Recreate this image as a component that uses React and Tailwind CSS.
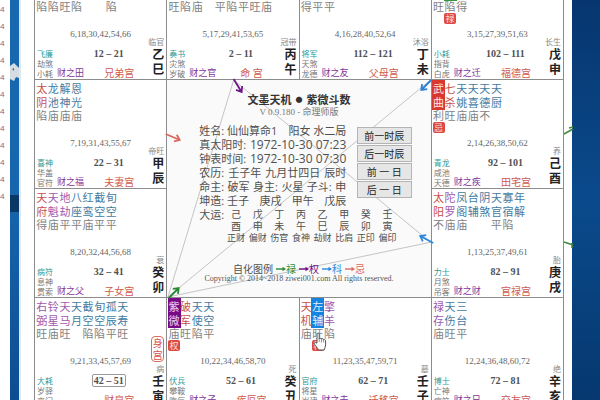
import React from 'react';
import clsx from 'clsx';

const MAIN = 'text-[#c9504a]';
const MINOR = 'text-[#a058ae]';
const MISC = 'text-[#447b9f]';

const star = (name, level = '', color = MISC, extra = {}) => ({ name, level, color, ...extra });

// the star names of the top row are scrolled out of view
const levels = (text) => [...text].map((level) => star('', level.trim()));

const TOP = [
  {
    stars: levels('陷陷旺陷  陷'), ages: '6,18,30,42,54,66', range: '12 – 21',
    gods: ['飞廉', '劫煞', '小耗'], relation: '财之田', palace: '兄弟宫', phase: '临官', pillar: '乙巳',
  },
  {
    stars: levels('旺陷庙 平陷平旺庙'), ages: '5,17,29,41,53,65', range: '2 – 11',
    gods: ['奏书', '灾煞', '岁破'], relation: '财之官', palace: '命 宫', phase: '冠带', pillar: '丙午',
  },
  {
    stars: levels('得平平'), ages: '4,16,28,40,52,64', range: '112 – 121',
    gods: ['将军', '天煞', '龙德'], relation: '财之友', palace: '父母宫', phase: '沐浴', pillar: '丁未',
  },
  {
    stars: [star('', '旺'), star('', '陷', MISC, { fill: 'bg-[#2f9a3c]', tag: '禄' }), star('', '得')],
    ages: '3,15,27,39,51,63', range: '102 – 111',
    gods: ['小耗', '指背', '白虎'], relation: '财之迁', palace: '福德宫', phase: '长生', pillar: '戊申',
  },
];

const LEFT = [
  {
    stars: [star('太阴', '陷', MAIN), star('龙池', '庙'), star('解神', '庙'), star('恩光', '庙')],
    ages: '7,19,31,43,55,67', range: '22 – 31',
    gods: ['喜神', '华盖', '官符'], relation: '财之福', palace: '夫妻宫', phase: '帝旺', pillar: '甲辰',
  },
  {
    stars: [
      star('天府', '得', MAIN), star('天魁', '庙', MINOR), star('地劫', '平', MINOR), star('八座', '平'),
      star('红鸾', '庙'), star('截空', '平'), star('旬空', '平'),
    ],
    ages: '8,20,32,44,56,68', range: '32 – 41',
    gods: ['病符', '息神', '贯索'], relation: '财之父', palace: '子女宫', phase: '衰', pillar: '癸卯',
  },
];

const RIGHT = [
  {
    stars: [
      star('武曲', '利', 'text-[#ffe4e0]', { fill: 'bg-[#d8382f]', tag: '忌' }), star('七杀', '旺', MAIN),
      star('天姚', '庙'), star('天喜', '庙'), star('天德', '不'), star('天厨'),
    ],
    ages: '2,14,26,38,50,62', range: '92 – 101',
    gods: ['青龙', '咸池', '天德'], relation: '财之疾', palace: '田宅宫', phase: '养', pillar: '己酉',
  },
  {
    stars: [
      star('太阳', '不', MAIN), star('陀罗', '庙', MINOR), star('凤阁', '庙'), star('台辅'),
      star('阴煞'), star('天官', '平'), star('寡宿', '陷'), star('年解'),
    ],
    ages: '1,13,25,37,49,61', range: '82 – 91',
    gods: ['力士', '月煞', '吊客'], relation: '财之财', palace: '官禄宫', phase: '胎', pillar: '庚戌',
  },
];

const BOTTOM = [
  {
    stars: [
      star('右弼', '旺', MINOR), star('铃星', '庙', MINOR), star('天马', '旺', MINOR), star('天月'),
      star('截空', '陷'), star('旬空', '陷'), star('孤辰', '平'), star('天寿', '旺'),
    ],
    ages: '9,21,33,45,57,69', range: '42 – 51', current: true, body: true,
    gods: ['大耗', '岁驿', '丧门'], relation: '', palace: '财帛宫', phase: '病', pillar: '壬寅',
  },
  {
    stars: [
      star('紫微', '庙', 'text-[#ecd4f0]', { fill: 'bg-[#780a88]', tag: '权' }), star('破军', '旺', MAIN),
      star('天使', '陷'), star('天空', '平'),
    ],
    ages: '10,22,34,46,58,70', range: '52 – 61',
    gods: ['伏兵', '攀鞍', '晦气'], relation: '财之子', palace: '疾厄宫', phase: '死', pillar: '癸丑',
  },
  {
    stars: [
      star('天机', '庙', MAIN), star('左辅', '旺', 'text-[#e0f0ff]', { fill: 'bg-[#1583e0]', tag: '科', pointer: true }),
      star('擎羊', '陷', MINOR),
    ],
    ages: '11,23,35,47,59,71', range: '62 – 71',
    gods: ['官府', '将星', '岁建'], relation: '财之夫', palace: '迁移宫', phase: '墓', pillar: '壬子',
  },
  {
    stars: [star('禄存', '庙', MINOR), star('天伤', '旺'), star('三台', '平')],
    ages: '12,24,36,48,60,72', range: '72 – 81',
    gods: ['博士', '亡神', '病符'], relation: '财之兄', palace: '交友宫', phase: '绝', pillar: '辛亥',
  },
];

const DECADES = [
  ['己', '戊', '丁', '丙', '乙', '甲', '癸', '壬'],
  ['酉', '申', '未', '午', '巳', '辰', '卯', '寅'],
  ['正财', '偏财', '伤官', '食神', '劫财', '比肩', '正印', '偏印'],
];

const LEGEND = [
  { label: '禄', color: 'text-[#2a8a35]' },
  { label: '权', color: 'text-[#780a88]' },
  { label: '科', color: 'text-[#2b87dc]' },
  { label: '忌', color: 'text-[#dd6a60]' },
];

const ARROWS = [
  { from: [233, 79], to: [241, 92], color: '#6f1784' },
  { from: [431, 80], to: [421, 90], color: '#2b80d4' },
  { from: [165, 134], to: [179, 140], color: '#d9685f' },
  { from: [168, 298], to: [178, 288], color: '#268a35' },
  { from: [433, 243], to: [420, 236], color: '#2b87dc' },
];

const Arrow = ({ from, to, color }) => {
  const angle = Math.atan2(to[1] - from[1], to[0] - from[0]);
  const wing = (turn) => `${to[0] - 6 * Math.cos(angle + turn)} ${to[1] - 6 * Math.sin(angle + turn)}`;
  return (
    <path
      d={`M${from[0]} ${from[1]}L${to[0]} ${to[1]}M${wing(0.65)}L${to[0]} ${to[1]}L${wing(-0.65)}`}
      stroke={color}
      strokeWidth="1.8"
      fill="none"
    />
  );
};

const HandCursor = () => (
  <svg viewBox="0 0 14 19" className="absolute left-px top-[34px] z-10 h-[19px] w-3.5" aria-hidden="true">
    <path
      d="M4 11V2.2c0-1.6 2.2-1.6 2.2 0V7c.4-1 2-.8 2.2.3.5-.9 2-.6 2.2.5.6-.7 2-.4 2 1V13c0 2-1 3-1.4 5H5.400c-.6-2-2.400-3.600-3.900-5.800-.8-1.300.8-2.300 1.700-1.200z"
      fill="#fff"
      stroke="#555"
      strokeWidth="1"
    />
    <path d="M6.200 7v3M8.400 7.500v3M10.600 8v2.500" stroke="#777" strokeWidth=".8" />
  </svg>
);

const Star = ({ name, level, color, fill, tag, pointer }) => (
  <div className="relative flex flex-col items-center">
    <div className={clsx('flex h-[30px] w-[13px] flex-col items-center pt-0.5 text-[11px] leading-[14px]', color, fill)}>
      {[...name].map((ch) => <span key={ch}>{ch}</span>)}
    </div>
    <span className="h-3 text-[11px] leading-3 text-[#828282]">{level}</span>
    {tag && (
      <span className="w-3 rounded-xs bg-[#dc4a42] text-center text-[9px] leading-[11px] text-[#ffe4e0]">{tag}</span>
    )}
    {pointer && <HandCursor />}
  </div>
);

const Palace = ({ stars, ages, range, current, body, gods, relation, palace, phase, pillar }) => (
  <section className="flex h-[109px] min-w-0 flex-col justify-between border-b border-r border-[#8c8c8c] bg-white">
    <div className="grid h-0 grid-cols-11 pl-px pr-[3px]">
      {stars.map((s, i) => <Star key={i} {...s} />)}
    </div>

    <div className="flex items-end px-0.5">
      <div className="w-4 shrink-0 whitespace-nowrap text-[8px] leading-[10px] text-[#777]">
        {gods.map((god, i) => <p key={god} className={clsx(i === 0 && 'text-[#2c9a97]')}>{god}</p>)}
      </div>

      <div className="min-w-0 flex-1">
        <p className="text-center font-['Liberation_Serif',serif] text-[9px] leading-3 text-[#666]">{ages}</p>
        <p className="mt-2 pl-4 text-center font-['Liberation_Serif',serif] text-[10px] font-bold leading-3 text-[#505050]">
          <span className={clsx(current && 'rounded-xs border border-[#999] px-px')}>{range}</span>
        </p>
        <div className="mt-[7px] flex items-center justify-between whitespace-nowrap pl-1 pr-3.5 leading-3">
          <span className="text-[9px] text-[#82369a]">{relation}</span>
          <span className="w-[30px] text-center text-[10px] text-[#cf5a4c]">{palace}</span>
        </div>
      </div>

      <div className="flex w-4 shrink-0 flex-col items-end pb-0.5">
        {body && (
          <span className="mb-0.5 flex w-[13px] flex-col items-center rounded-sm border border-[#dd6a60] text-[10px] leading-3 text-[#d4534a]">
            <span>身</span>
            <span>宫</span>
          </span>
        )}
        <span className="whitespace-nowrap text-[8px] leading-[10px] text-[#888]">{phase}</span>
        <span className="flex flex-col text-[12px] font-bold leading-[15px] text-[#222]">
          {[...pillar].map((ch) => <span key={ch}>{ch}</span>)}
        </span>
      </div>
    </div>
  </section>
);

const Row = ({ children }) => <p className="flex justify-between whitespace-pre">{children}</p>;

const Digits = ({ children }) => <span className="text-xs leading-[14px]">{children}</span>;

const CenterPanel = () => (
  <section className="relative col-span-2 row-span-2 border-b border-r border-[#8c8c8c] bg-[#fafafa] text-[#505050]">
    <svg viewBox="166 80 265 218" preserveAspectRatio="none" className="absolute inset-0 h-full w-full" aria-hidden="true">
      <path d="M233 80L167 298L431 80M233 80L431 243L167 298" fill="none" stroke="#c4c4c4" strokeWidth="1" />
    </svg>

    <div className="relative flex h-full flex-col pt-3">
      <h1 className="flex items-center justify-center gap-1 text-[11px] font-bold leading-4 text-[#333]">
        <span>文墨天机</span>
        <span className="text-[7px]">●</span>
        <span>紫微斗数</span>
      </h1>
      <p className="text-center font-['Liberation_Serif','Noto_Sans_CJK_SC',serif] text-[9px] leading-2 text-[#777]">V 0.9.180 - 命理师版</p>

      <div className="mt-2 flex justify-between pl-8 pr-[19px]">
        <div className="w-[147px] text-[11px] leading-[14px]">
          <Row><span>姓名: 仙仙算命1</span><span>阳女 水二局</span></Row>
          <Row><span>真太阳时:</span><Digits>1972-10-30 07:23</Digits></Row>
          <Row><span>钟表时间:</span><Digits>1972-10-30 07:30</Digits></Row>
          <Row><span>农历:</span><span>壬子年</span><span>九月廿四日</span><span>辰时</span></Row>
          <Row><span>命主:</span><span>破军</span><span>身主:</span><span>火星</span><span>子斗:</span><span>申</span></Row>
          <Row><span>坤造: 壬子</span><span>庚戌</span><span>甲午</span><span>戊辰</span></Row>
        </div>
        <div className="flex flex-col gap-px pt-[3px]">
          {['前一时辰', '后一时辰', '前 一 日', '后 一 日'].map((label) => (
            <button
              key={label}
              type="button"
              className="h-[17px] w-[55px] border border-[#b4b4b4] bg-[#e6e6e6] text-[10px] leading-3 text-[#222]"
            >
              {label}
            </button>
          ))}
        </div>
      </div>

      <div className="flex pl-8 text-[11px] leading-[14px]">
        <span className="w-[26px]">大运:</span>
        <table className="w-[173px] table-fixed text-center">
          <tbody>
            {DECADES.map((row, i) => (
              <tr key={i} className={clsx('leading-3', i === 2 ? 'text-[9px]' : 'text-[10px]')}>
                {row.map((cell) => <td key={cell} className="whitespace-nowrap p-0">{cell}</td>)}
              </tr>
            ))}
          </tbody>
        </table>
      </div>

      <div className="mt-auto pb-3.5 text-center">
        <p className="flex justify-center gap-[3px] text-[10px] leading-3">
          <span>自化图例</span>
          {LEGEND.map(({ label, color }) => (
            <span key={label} className={clsx('flex items-center', color)}>
              <svg viewBox="0 0 10 6" className="h-1.5 w-2.5" aria-hidden="true">
                <path d="M0 3H8" stroke="currentColor" strokeWidth="1.400" />
                <path d="M6.500 .8L10 3L6.500 5.200Z" fill="currentColor" />
              </svg>
              {label}
            </span>
          ))}
        </p>
        <p className="font-['Liberation_Serif',serif] text-[8px] leading-2 text-[#555]">
          Copyright © 2014~2018 ziwei001.com All rights reserved.
        </p>
      </div>
    </div>
  </section>
);

export default function App() {
  return (
    <div className="flex h-screen overflow-hidden bg-white font-['Open_Sans','Noto_Sans_CJK_SC',sans-serif]">
      {/* Edge of the window behind */}
      <div className="w-2.5 shrink-0 text-[8px] leading-[17px] text-[#8b5c7c]">
        {[...Array(12)].map((_, i) => <p key={i}>4</p>)}
      </div>
      <div className="w-[9px] shrink-0 bg-linear-to-b from-[#1768ae] via-[#1665ad] to-[#0d4d92]">
        <svg viewBox="0 0 9 400" preserveAspectRatio="none" className="h-full w-full" aria-hidden="true">
          <path d="M0 66L4 63L7 66L9 68V78L6 77L4 81L0 79Z" fill="#d5dde2" />
          <path d="M2 69L4 68V71Z" fill="#5d6970" />
          <path d="M0 195H9V212H0Z" fill="#0b3767" />
        </svg>
      </div>

      <main className="min-w-0 flex-1 border-l-2 border-[#dfe9f1] pl-[13px] pr-2">
        <div className="relative -mt-[29px] grid grid-cols-4 border-l border-[#8c8c8c]">
          {TOP.map((p) => <Palace key={p.pillar} {...p} />)}
          <Palace {...LEFT[0]} />
          <CenterPanel />
          <Palace {...RIGHT[0]} />
          <Palace {...LEFT[1]} />
          <Palace {...RIGHT[1]} />
          {BOTTOM.map((p) => <Palace key={p.pillar} {...p} />)}

          <svg
            viewBox="34 -29 530 436"
            preserveAspectRatio="none"
            className="pointer-events-none absolute inset-0 h-full w-full overflow-visible"
            aria-hidden="true"
          >
            {ARROWS.map((arrow) => <Arrow key={arrow.from.join()} {...arrow} />)}
            <path d="M564 134L573 129M569 128L573 127M564 242L573 245M572 243V248" stroke="#3f8a3f" strokeWidth="1.500" />
          </svg>
        </div>
      </main>

      {/* Desktop */}
      <div className="w-7 shrink-0 bg-linear-to-b from-[#07366f] via-[#0a4a8c] to-[#06386f]" />
    </div>
  );
}
